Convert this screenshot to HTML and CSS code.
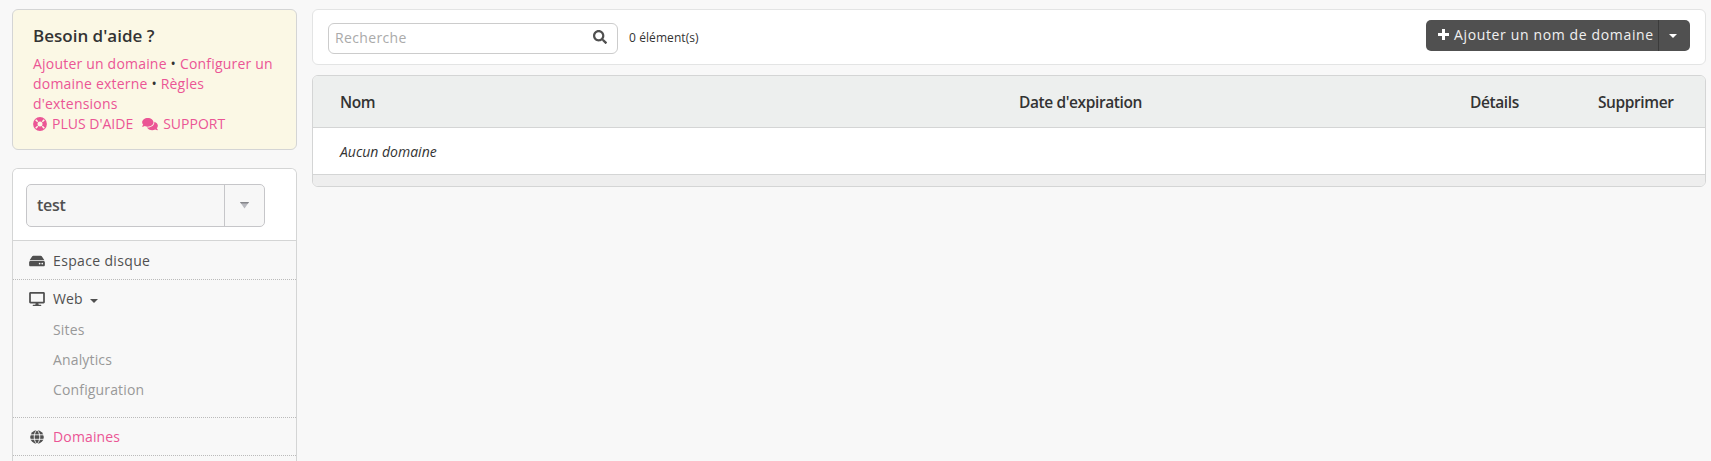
FILE: index.html
```
<!DOCTYPE html>
<html lang="fr">
<head>
<meta charset="utf-8">
<title>Domaines</title>
<link rel="stylesheet" href="styles.css">
</head>
<body>
<div class="layout">
  <aside class="sidebar">
    <section class="help">
      <h2 class="help-title">Besoin d'aide ?</h2>
      <p class="help-text"><a>Ajouter un domaine</a> • <a>Configurer un<br>domaine externe</a> • <a>Règles<br>d'extensions</a></p>
      <div class="help-links">
        <a><svg class="ic-ring" viewBox="0 0 14 14"><circle cx="7" cy="7" r="4.7" fill="none" stroke="currentColor" stroke-width="4.4"/><path d="M2.700 2.700l2 2M11.300 2.700l-2 2M2.700 11.300l2-2M11.300 11.300l-2-2" stroke="#fbf8e5" stroke-width="1.500"/></svg><span>PLUS D'AIDE</span></a>
        <a><svg class="ic-chat" viewBox="0 0 576 512"><path fill="currentColor" d="M416 192c0-88.400-93.100-160-208-160S0 103.600 0 192c0 34.300 14.100 65.900 38 92-13.400 30.200-35.500 54.200-35.800 54.500-2.200 2.300-2.800 5.700-1.500 8.700S4.800 352 8 352c36.600 0 66.900-12.300 88.700-25 32.200 15.700 70.300 25 111.300 25 114.900 0 208-71.600 208-160zm122 220c23.900-26 38-57.700 38-92 0-66.900-53.500-124.200-129.300-148.100.9 6.600 1.300 13.300 1.300 20.100 0 105.900-107.700 192-240 192-10.800 0-21.300-.8-31.700-1.900C207.800 439.600 281.800 480 368 480c41 0 79.100-9.200 111.300-25 21.800 12.700 52.100 25 88.700 25 3.200 0 6.100-1.900 7.300-4.800 1.300-2.900.7-6.300-1.500-8.700-.3-.3-22.400-24.200-35.800-54.500z"/></svg><span>SUPPORT</span></a>
      </div>
    </section>
    <nav class="menu">
      <div class="picker">
        <div class="select"><span class="select-value">test</span><span class="select-arrow"><svg viewBox="0 0 9 7"><path d="M0 0h9L4.500 6.500z" fill="#b8b9bf"/><path d="M0 0h9l-1 1.400H1z" fill="#85868a"/></svg></span></div>
      </div>
      <div class="item disk"><svg class="ic" viewBox="0 0 576 512"><path fill="currentColor" d="M576 304v96c0 26.500-21.500 48-48 48H48c-26.500 0-48-21.500-48-48v-96c0-26.500 21.500-48 48-48h480c26.500 0 48 21.500 48 48zm-48-80a79.600 79.600 0 0 1 30.800 6.200L462.300 85.400A48 48 0 0 0 422.300 64H153.700a48 48 0 0 0-40 21.400L17.200 230.200A79.600 79.600 0 0 1 48 224h480zm-48 96c-17.700 0-32 14.300-32 32s14.300 32 32 32 32-14.300 32-32-14.300-32-32-32zm-96 0c-17.700 0-32 14.300-32 32s14.300 32 32 32 32-14.300 32-32-14.300-32-32-32z"/></svg><span>Espace disque</span></div>
      <div class="item web"><svg class="ic" viewBox="0 0 576 512"><path fill="currentColor" d="M528 0H48C21.500 0 0 21.500 0 48v320c0 26.500 21.500 48 48 48h192l-16 48h-72c-13.300 0-24 10.700-24 24s10.700 24 24 24h272c13.300 0 24-10.700 24-24s-10.700-24-24-24h-72l-16-48h192c26.500 0 48-21.500 48-48V48c0-26.500-21.500-48-48-48zm-16 352H64V64h448v288z"/></svg><span>Web</span><i class="caret"></i></div>
      <ul class="sub"><li>Sites</li><li>Analytics</li><li>Configuration</li></ul>
      <div class="item domains"><svg class="ic globe" viewBox="0 0 14 14"><circle cx="7" cy="7" r="6.800" fill="currentColor"/><path d="M0 4.800h14M0 9.300h14M7 0C3.300 3 3.300 11 7 14C10.700 11 10.700 3 7 0" fill="none" stroke="#f8f8f8" stroke-width=".9"/></svg><span>Domaines</span></div>
    </nav>
  </aside>
  <main class="main">
    <header class="toolbar">
      <div class="search"><span>Recherche</span><svg viewBox="0 0 512 512"><path fill="currentColor" d="M505 442.700L405.300 343c-4.500-4.500-10.600-7-17-7H372c27.600-35.300 44-79.700 44-128C416 93.100 322.900 0 208 0S0 93.100 0 208s93.100 208 208 208c48.300 0 92.700-16.400 128-44v16.300c0 6.400 2.500 12.500 7 17l99.700 99.700c9.400 9.400 24.600 9.400 33.900 0l28.300-28.300c9.400-9.400 9.400-24.600.1-34zM208 336c-70.700 0-128-57.200-128-128 0-70.700 57.200-128 128-128 70.700 0 128 57.200 128 128 0 70.700-57.200 128-128 128z"/></svg></div>
      <span class="count">0 élément(s)</span>
      <div class="button"><span class="button-main"><svg viewBox="0 0 11 11"><path d="M4 0h3v4h4v3H7v4H4V7H0V4h4z" fill="#fff"/></svg><span>Ajouter un nom de domaine</span></span><span class="button-more"><i class="caret light"></i></span></div>
    </header>
    <section class="table">
      <div class="thead"><span class="name">Nom</span><span class="date">Date d'expiration</span><span class="details">Détails</span><span class="delete">Supprimer</span></div>
      <div class="row">Aucun domaine</div>
      <div class="tfoot"></div>
    </section>
  </main>
</div>
</body>
</html>
```
FILE: styles.css
```
* { box-sizing: border-box; }
body { margin: 0; background: #f8f8f8; color: #333; font: 14px/20px "Open Sans", "Noto Sans", sans-serif; }
svg { display: block; flex: none; }
.layout { display: flex; gap: 15px; height: 461px; padding: 9px 5px 0 12px; }
.sidebar { width: 285px; flex: none; }
.help { height: 141px; padding: 14px 20px; background: #fbf8e5; border: 1px solid #d4d5d5; border-radius: 6px; }
.help-title { margin: 0 0 6px; font-size: 17px; line-height: 24px; font-weight: 600; }
.help-text { margin: 0; white-space: nowrap; letter-spacing: .2px; }
.help a { color: #eb5595; }
.help-links { display: flex; gap: 9px; }
.help-links a { display: flex; align-items: center; gap: 5px; }
.ic-ring { width: 14px; height: 14px; }
.ic-chat { width: 16px; height: 14px; }
.menu { height: 293px; margin-top: 18px; border: 1px solid #d4d5d5; border-bottom: 0; border-radius: 6px 6px 0 0; overflow: hidden; color: #505050; letter-spacing: .15px; }
.picker { height: 72px; padding: 15px 13px; background: #fff; border-bottom: 1px solid #d4d5d5; }
.select { display: flex; width: 239px; height: 43px; border: 1px solid #c6c6c9; border-radius: 5px; background: #f7f7f7; }
.select-value { flex: 1; padding-left: 10px; line-height: 41px; font-size: 16px; font-weight: 600; letter-spacing: -.3px; }
.select-arrow { width: 40px; border-left: 1px solid #c6c6c9; padding: 17px 0 0 15px; }
.select-arrow svg { width: 9px; height: 7px; }
.item { display: flex; align-items: center; padding-left: 16px; }
.ic { width: 16px; height: 14px; margin-right: 8px; }
.globe { width: 14px; margin: 0 9px 0 1px; }
.disk { height: 39px; padding-top: 2px; border-bottom: 1px dotted #bbb; letter-spacing: .35px; }
.web { height: 37px; }
.caret { margin: 4px 0 0 7px; border: 4px solid transparent; border-top-color: currentColor; border-bottom: 0; }
.sub { list-style: none; margin: -2px 0 0; padding: 0 0 13px 40px; height: 103px; border-bottom: 1px dotted #bbb; line-height: 30px; color: #999; }
.domains { height: 38px; border-bottom: 1px dotted #bbb; }
.domains span { color: #eb5595; }
.main { flex: 1; min-width: 0; }
.toolbar { display: flex; height: 56px; padding: 10px 15px 0 15px; background: #fff; border: 1px solid #e3e4e4; border-radius: 6px; }
.search { display: flex; justify-content: space-between; width: 290px; height: 31px; margin-top: 3px; padding: 5px 10px 0 6px; border: 1px solid #ccc; border-radius: 6px; color: #505050; }
.search span { color: #aaa; line-height: 18px; letter-spacing: .35px; }
.search svg { width: 14px; height: 14px; margin-top: 1px; }
.count { margin: 8px 0 0 11px; font-size: 12px; letter-spacing: .08px; }
.button { display: flex; width: 264px; height: 31px; margin-left: auto; border-radius: 5px; background: #505050; color: #f0f0f0; }
.button-main { display: flex; flex: 1; align-items: center; gap: 5px; padding: 0 0 2px 12px; letter-spacing: .64px; white-space: nowrap; }
.button-main svg { width: 11px; height: 11px; }
.button-more { width: 32px; flex: none; border-left: 1px solid #3b3b3b; padding: 10px 0 0 3px; }
.light { display: block; width: 0; color: #fff; }
.table { margin-top: 10px; height: 112px; background: #fff; border: 1px solid #d4d5d5; border-radius: 6px; overflow: hidden; }
.thead { display: flex; height: 52px; padding: 1px 0 0 27px; line-height: 51px; background: #edefee; border-bottom: 1px solid #d4d5d5; font-size: 15.5px; font-weight: 600; letter-spacing: -.4px; white-space: nowrap; }
.name { flex: none; width: 679px; }
.date { flex: none; width: 451px; }
.details { flex: none; width: 128px; }
.row { height: 47px; padding-left: 27px; line-height: 48px; border-bottom: 1px solid #d4d5d5; font-style: italic; }
.tfoot { height: 11px; background: #eee; }
```
